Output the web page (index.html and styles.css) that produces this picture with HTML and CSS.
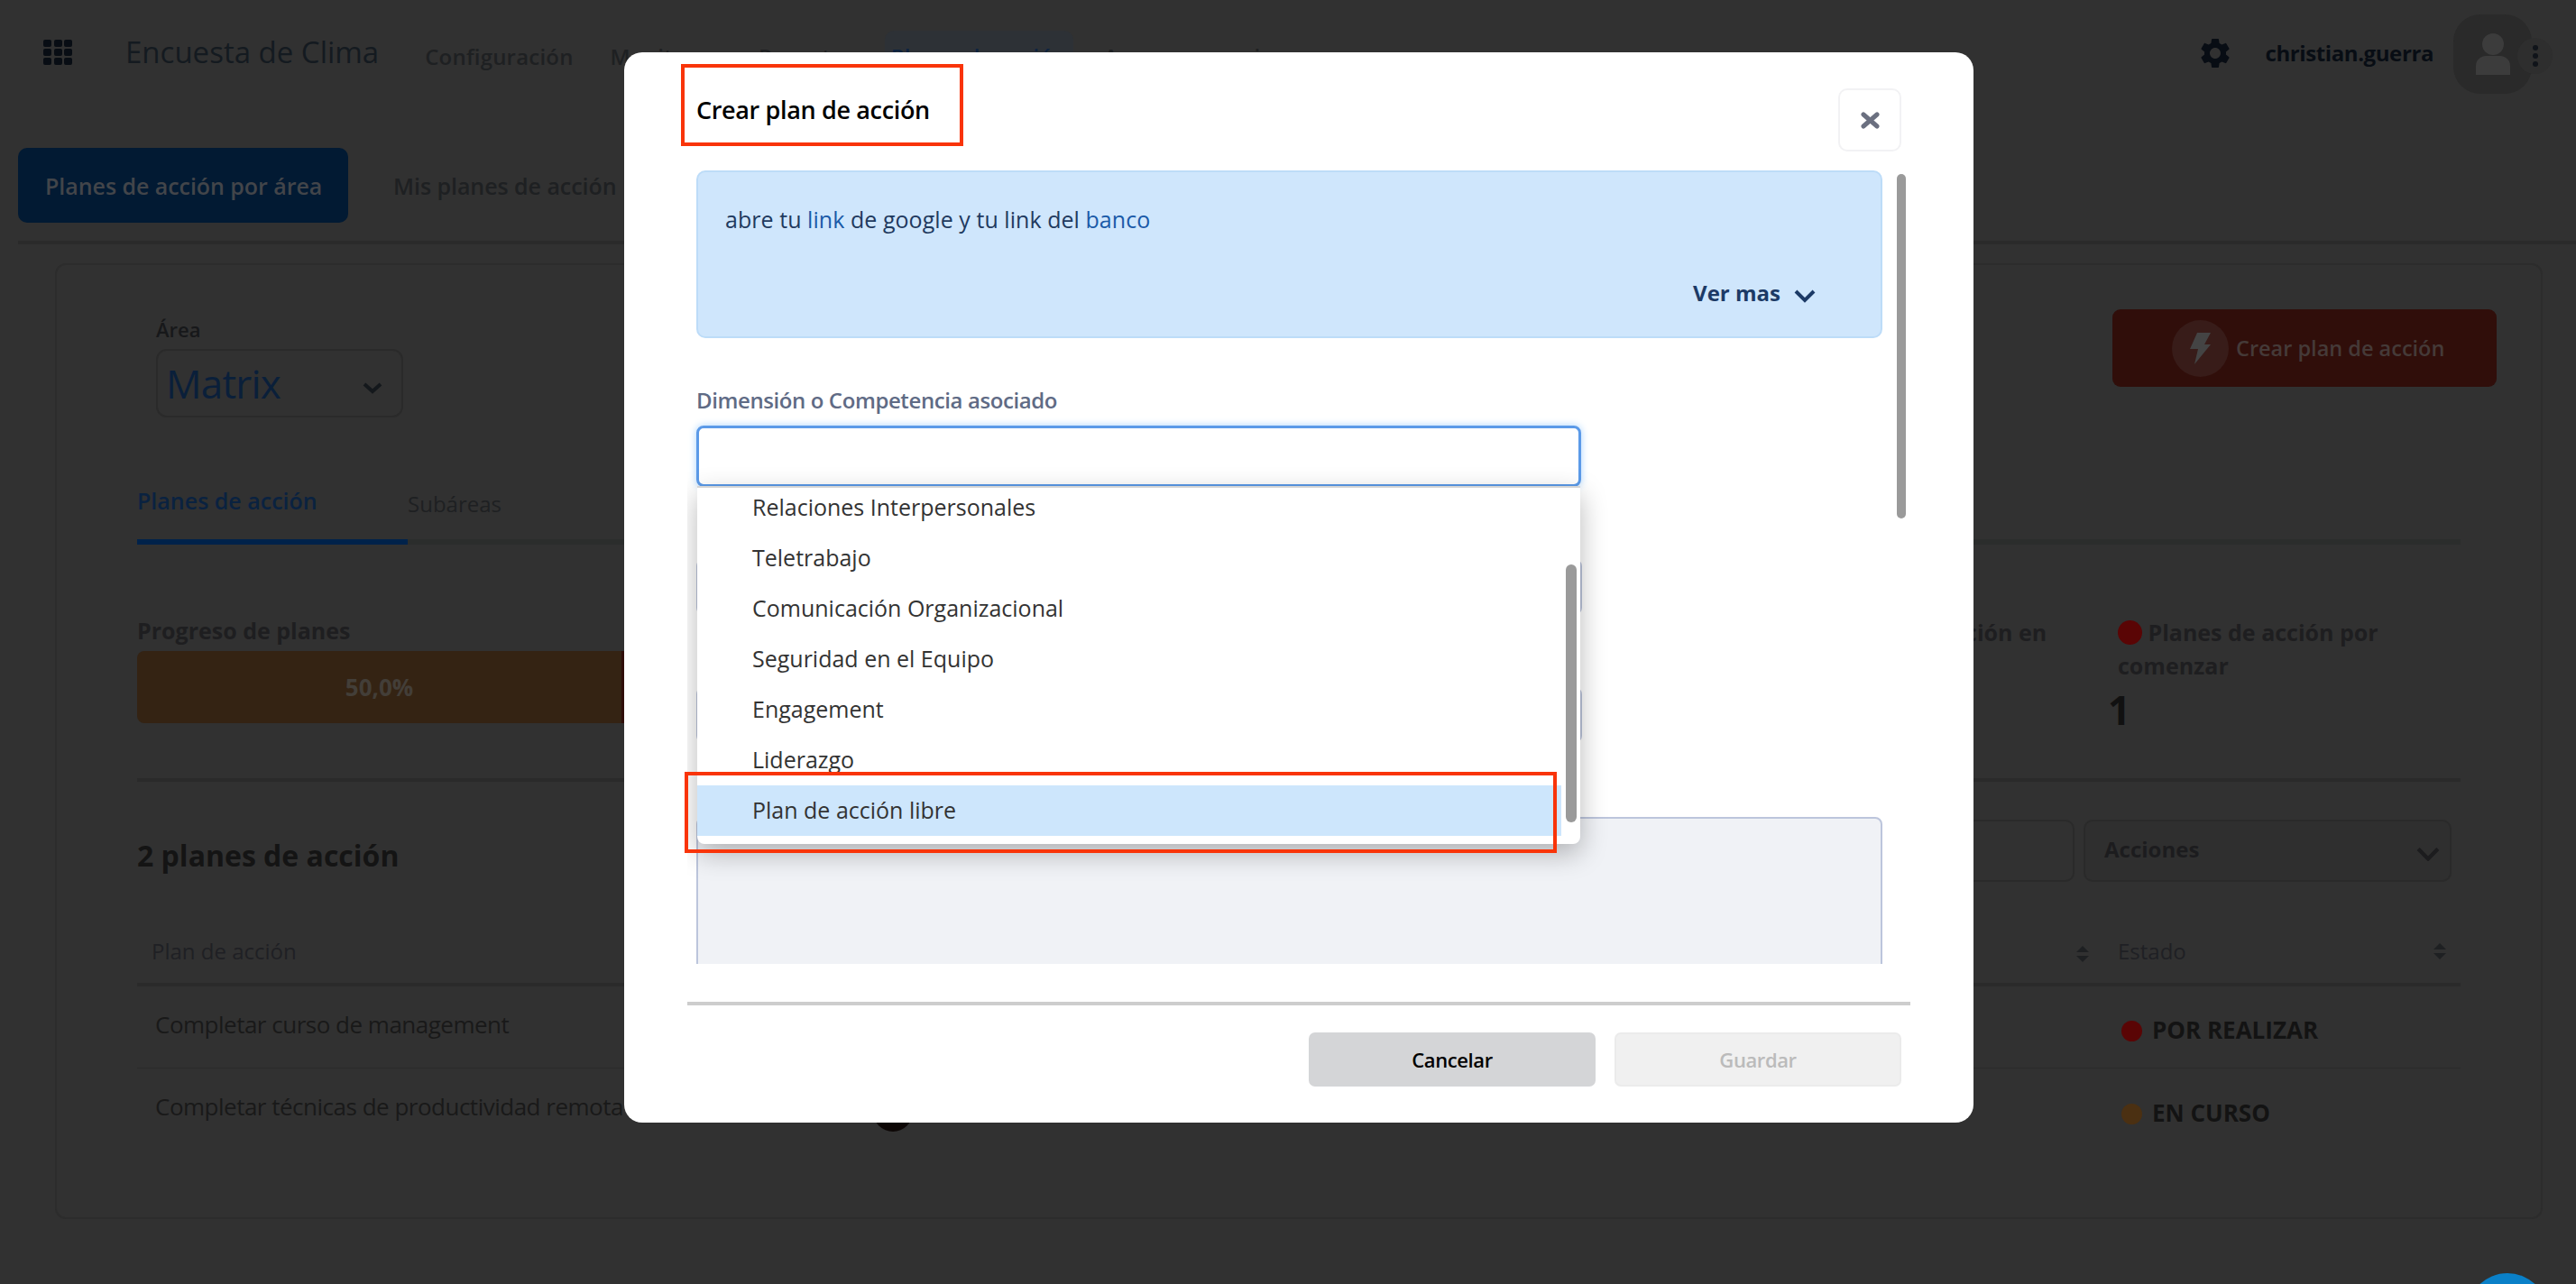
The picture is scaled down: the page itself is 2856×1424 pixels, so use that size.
FILE: index.html
```html
<!DOCTYPE html>
<html lang="es">
<head>
    <meta charset="UTF-8">
    <meta name="viewport" content="width=device-width, initial-scale=1.0">
    <title>Encuesta de Clima - Planes de acción</title>
    <link rel="stylesheet" href="styles.css">
</head>
<body>
    <header class="topbar">
        <div class="apps-icon">
            <span></span><span></span><span></span>
            <span></span><span></span><span></span>
            <span></span><span></span><span></span>
        </div>
        <div class="app-title">Encuesta de Clima</div>
        <nav class="main-nav">
            <a>Configuración</a>
            <a>Monitoreo</a>
            <a>Reportes</a>
            <a class="active">Planes de acción</a>
            <a>Accesos usuarios</a>
        </nav>
        <svg class="gear" viewBox="0 0 24 24"><path d="M19.14 12.94c.04-.3.06-.61.06-.94 0-.32-.02-.64-.07-.94l2.03-1.58a.49.49 0 0 0 .12-.61l-1.92-3.32a.488.488 0 0 0-.59-.22l-2.39.96c-.5-.38-1.03-.7-1.62-.94l-.36-2.54a.484.484 0 0 0-.48-.41h-3.84c-.24 0-.43.17-.47.41l-.36 2.54c-.59.24-1.13.57-1.62.94l-2.39-.96c-.22-.08-.47 0-.59.22L2.74 8.87c-.12.21-.08.47.12.61l2.03 1.58c-.05.3-.09.63-.09.94s.02.64.07.94l-2.03 1.58a.49.49 0 0 0-.12.61l1.92 3.32c.12.22.37.29.59.22l2.39-.96c.5.38 1.03.7 1.62.94l.36 2.54c.05.24.24.41.48.41h3.84c.24 0 .44-.17.47-.41l.36-2.54c.59-.24 1.13-.56 1.62-.94l2.39.96c.22.08.47 0 .59-.22l1.92-3.32c.12-.22.07-.47-.12-.61l-2.01-1.58zM12 15.6c-1.98 0-3.6-1.62-3.6-3.6s1.62-3.6 3.6-3.6 3.6 1.62 3.6 3.6-1.62 3.6-3.6 3.6z"/></svg>
        <div class="user-name">christian.guerra</div>
        <div class="avatar">
            <svg viewBox="0 0 40 46"><ellipse cx="20" cy="12" rx="12" ry="12"/><path d="M1 46V36c0-7 6-11 11-11h16c5 0 11 4 11 11v10z"/></svg>
            <div class="kebab"><i></i><i></i><i></i></div>
        </div>
    </header>

    <div class="page-tabs">
        <a class="page-tab active">Planes de acción por área</a>
        <a class="page-tab">Mis planes de acción</a>
    </div>

    <main class="card">
        <div class="card-top">
            <div class="area-block">
                <div class="area-label">Área</div>
                <div class="area-select">
                    <span>Matrix</span>
                    <svg class="chev" viewBox="0 0 24 14"><polyline points="3,3 12,11 21,3"/></svg>
                </div>
            </div>
            <button class="create-btn">
                <span class="bolt-circle"><svg viewBox="0 0 23 35"><polygon points="8,0 23,0 16,13 23,13 5,35 9,18 0,18"/></svg></span>
                Crear plan de acción
            </button>
        </div>

        <div class="card-body">
            <div class="sub-tabs">
                <a class="sub-tab active">Planes de acción</a>
                <a class="sub-tab">Subáreas</a>
            </div>

            <section class="stats">
                <div class="progress-col">
                    <div class="stat-title">Progreso de planes</div>
                    <div class="progress-bar">
                        <div class="progress-done">50,0%</div>
                        <div class="progress-rest"></div>
                    </div>
                </div>
                <div class="stat-col">
                    <div class="stat-title"><span class="dot orange"></span> Planes de acción en curso</div>
                    <div class="stat-value">1</div>
                </div>
                <div class="stat-col">
                    <div class="stat-title"><span class="dot red"></span> Planes de acción por comenzar</div>
                    <div class="stat-value">1</div>
                </div>
            </section>

            <section class="list-head">
                <h2>2 planes de acción</h2>
                <div class="list-tools">
                    <div class="search-box"></div>
                    <div class="actions-select">
                        Acciones
                        <svg class="chev" viewBox="0 0 24 14"><polyline points="2,2 12,12 22,2"/></svg>
                    </div>
                </div>
            </section>

            <table class="plans">
                <thead>
                    <tr>
                        <th class="col-plan">Plan de acción</th>
                        <th class="col-owner"></th>
                        <th class="col-date"><svg class="sort" viewBox="0 0 14 18"><polygon points="7,0 14,7 0,7"/><polygon points="0,11 14,11 7,18"/></svg></th>
                        <th class="col-state">Estado<svg class="sort" viewBox="0 0 14 18"><polygon points="7,0 14,7 0,7"/><polygon points="0,11 14,11 7,18"/></svg></th>
                    </tr>
                </thead>
                <tbody>
                    <tr>
                        <td class="plan-name">Completar curso de management</td>
                        <td><span class="owner"></span></td>
                        <td></td>
                        <td class="state"><span class="dot red"></span>POR REALIZAR</td>
                    </tr>
                    <tr>
                        <td class="plan-name">Completar técnicas de productividad remota</td>
                        <td><span class="owner"></span></td>
                        <td></td>
                        <td class="state"><span class="dot orange"></span>EN CURSO</td>
                    </tr>
                </tbody>
            </table>
        </div>
    </main>

    <div class="chat-bubble"></div>

    <div class="modal">
        <div class="modal-head">
            <h3>Crear plan de acción</h3>
            <button class="modal-close">
                <svg viewBox="0 0 21 19"><line x1="3" y1="3" x2="18" y2="16"/><line x1="18" y1="3" x2="3" y2="16"/></svg>
            </button>
        </div>

        <div class="modal-body">
            <div class="alert">
                <p>abre tu <a>link</a> de google y tu link del <a>banco</a></p>
                <div class="see-more">
                    Ver mas
                    <svg viewBox="0 0 26 16"><polyline points="3,3 13,13 23,3"/></svg>
                </div>
            </div>

            <label class="field-label">Dimensión o Competencia asociado</label>
            <div class="combo-input"></div>
            <div class="field"></div>
            <div class="field"></div>
            <div class="textarea"></div>

            <div class="dropdown">
                <div class="option first">Relaciones Interpersonales</div>
                <div class="option">Teletrabajo</div>
                <div class="option">Comunicación Organizacional</div>
                <div class="option">Seguridad en el Equipo</div>
                <div class="option">Engagement</div>
                <div class="option">Liderazgo</div>
                <div class="option selected">Plan de acción libre</div>
                <div class="dropdown-thumb"></div>
            </div>
            <div class="body-thumb"></div>
        </div>

        <div class="modal-foot">
            <button class="btn-cancel">Cancelar</button>
            <button class="btn-save">Guardar</button>
        </div>

        <div class="mark mark-title"></div>
        <div class="mark mark-option"></div>
    </div>
</body>
</html>
```

FILE: styles.css
```css
* {
    box-sizing: border-box;
}

html, body {
    margin: 0;
    padding: 0;
    height: 100%;
    overflow: hidden;
}

body {
    position: relative;
    background-color: #313131;
    font-family: "Open Sans", "Noto Sans", sans-serif;
    color: #1c1c1e;
}

a {
    text-decoration: none;
}

button {
    font-family: inherit;
    border: none;
}

/* top bar */
.topbar {
    display: flex;
    align-items: center;
    height: 120px;
    padding: 0 49px 0 48px;
    margin-bottom: 44px;
}

.apps-icon {
    display: grid;
    grid-template-columns: repeat(3, 9px);
    grid-template-rows: repeat(3, 8px);
    gap: 2px 2.5px;
    margin-top: -4px;
}

.apps-icon span {
    background-color: #080d14;
    border-radius: 2px;
}

.app-title {
    margin: -6px 0 0 59px;
    font-size: 33px;
    color: #141a20;
}

.main-nav {
    display: flex;
    gap: 27px;
    margin: 4px 0 0 44px;
}

.main-nav a {
    display: flex;
    align-items: center;
    height: 56px;
    padding: 0 7px;
    font-size: 24px;
    font-weight: 600;
    letter-spacing: 0.2px;
    color: #1e2022;
    border-radius: 10px;
}

.main-nav a.active {
    background-color: #2d3136;
    color: #0d2340;
}

.gear {
    width: 40px;
    height: 40px;
    margin: -3px 0 0 auto;
    fill: #080d14;
}

.user-name {
    margin: -4px 0 0 35px;
    font-size: 24px;
    font-weight: 700;
    letter-spacing: -0.4px;
    color: #080d14;
}

.avatar {
    position: relative;
    display: flex;
    align-items: center;
    justify-content: center;
    width: 87px;
    height: 88px;
    margin-left: 22px;
    background-color: #2a2a2a;
    border-radius: 30px;
}

.avatar svg {
    width: 40px;
    height: 46px;
    fill: #3c3c3c;
}

.kebab {
    position: absolute;
    left: 71px;
    top: 26px;
    display: flex;
    flex-direction: column;
    align-items: center;
    justify-content: center;
    gap: 3px;
    width: 39px;
    height: 40px;
    background-color: #2e2e2e;
    border-radius: 50%;
}

.kebab i {
    width: 6px;
    height: 6px;
    background-color: #10141a;
    border-radius: 50%;
}

/* page tabs */
.page-tabs {
    display: flex;
    align-items: center;
    gap: 50px;
    margin-left: 20px;
    padding-bottom: 20px;
    border-bottom: 4px solid #2a2a2a;
}

.page-tab {
    font-size: 25px;
    font-weight: 600;
    letter-spacing: -0.05px;
    color: #1e2022;
}

.page-tab.active {
    display: flex;
    align-items: center;
    width: 366px;
    height: 83px;
    padding: 0 0 0 30px;
    background-color: #021a33;
    border-radius: 10px;
    color: #42454a;
}

/* main card */
.card {
    height: 1060px;
    margin: 21px 37px 0 61px;
    border: 2px solid #2c2c2c;
    border-radius: 12px;
}

.card-top {
    display: flex;
    justify-content: space-between;
    align-items: flex-start;
    padding: 49px 49px 0 110px;
}

.area-block {
    padding-top: 7px;
}

.area-label {
    height: 30px;
    font-size: 22px;
    font-weight: 600;
    line-height: 30px;
    color: #17181a;
}

.area-select {
    display: flex;
    align-items: center;
    justify-content: space-between;
    width: 274px;
    height: 76px;
    margin-top: 7px;
    padding: 0 20px 0 9px;
    border: 2px solid #2a2a2a;
    border-radius: 12px;
    font-size: 44px;
    letter-spacing: -0.8px;
    color: #0a1f3a;
}

.area-select .chev {
    width: 24px;
    height: 14px;
    margin-top: 10px;
    fill: none;
    stroke: #14181c;
    stroke-width: 4;
}

.create-btn {
    display: flex;
    align-items: center;
    gap: 8px;
    width: 426px;
    height: 86px;
    padding: 0 0 0 66px;
    background-color: #300e0a;
    border-radius: 9px;
    font-size: 23.5px;
    font-weight: 600;
    color: #453a38;
}

.bolt-circle {
    display: flex;
    align-items: center;
    justify-content: center;
    width: 63px;
    height: 63px;
    background-color: #381c19;
    border-radius: 50%;
}

.bolt-circle svg {
    width: 23px;
    height: 35px;
    fill: #444;
}

.card-body {
    padding: 0 89px;
}

.sub-tabs {
    display: flex;
    height: 84px;
    margin-top: 57px;
    border-bottom: 6px solid #2b2d2c;
}

.sub-tab {
    display: flex;
    align-items: center;
    height: 84px;
    padding-bottom: 8px;
    font-size: 24px;
    color: #1e2022;
}

.sub-tab.active {
    width: 300px;
    border-bottom: 6px solid #00224a;
    font-size: 25px;
    font-weight: 600;
    color: #0a2240;
}

/* stats */
.stats {
    position: relative;
    display: flex;
    height: 184px;
    margin-top: 79px;
    border-bottom: 4px solid #2a2a2a;
}

.progress-col {
    width: 1840px;
}

.stat-title {
    font-size: 25px;
    font-weight: 700;
    line-height: 37px;
    color: #1e1e20;
}

.progress-col .stat-title {
    line-height: 32px;
}

.progress-bar {
    display: flex;
    width: 1360px;
    height: 80px;
    margin-top: 7px;
    border-radius: 8px;
    overflow: hidden;
}

.progress-done {
    display: flex;
    align-items: center;
    justify-content: center;
    width: 537px;
    background-color: #342313;
    font-size: 26px;
    font-weight: 700;
    color: #433e38;
}

.progress-rest {
    flex: 1;
    background-color: #300e0a;
}

.stat-col {
    width: 340px;
    margin-right: 16px;
}

.stat-col .stat-value {
    margin: 3px 0 0 -11px;
    font-size: 44px;
    font-weight: 700;
    line-height: 54px;
    color: #111;
}

.dot {
    display: inline-block;
    width: 27px;
    height: 27px;
    border-radius: 50%;
    vertical-align: -4px;
}

.dot.red {
    background-color: #5a0505;
}

.dot.orange {
    background-color: #4b3012;
}

/* list */
.list-head {
    display: flex;
    justify-content: space-between;
    align-items: flex-start;
    padding: 42px 10px 0 0;
}

.list-head h2 {
    margin: 18px 0 0;
    font-size: 32px;
    font-weight: 700;
    color: #141414;
}

.list-tools {
    display: flex;
    gap: 10px;
}

.search-box,
.actions-select {
    height: 69px;
    border: 2px solid #2a2a2a;
    border-radius: 10px;
}

.search-box {
    width: 400px;
}

.actions-select {
    display: flex;
    align-items: center;
    justify-content: space-between;
    width: 408px;
    padding: 0 11px 4px 21px;
    background-color: #2f2f2f;
    font-size: 24px;
    font-weight: 700;
    color: #1c1c1e;
}

.actions-select .chev {
    width: 26px;
    height: 16px;
    margin-top: 10px;
    fill: none;
    stroke: #1c1c1e;
    stroke-width: 4;
}

.plans {
    width: 100%;
    margin-top: 41px;
    border-collapse: collapse;
    table-layout: fixed;
}

.plans th {
    height: 73px;
    padding: 0;
    font-size: 24px;
    font-weight: 500;
    text-align: left;
    color: #1f2024;
    border-bottom: 4px solid #2a2a2a;
}

.col-plan {
    width: 806px;
    padding-left: 16px !important;
}

.col-owner {
    width: 900px;
}

.col-date {
    width: 472px;
    text-align: right !important;
    padding-right: 14px !important;
}

.col-state {
    padding-left: 18px !important;
    position: relative;
}

.sort {
    width: 14px;
    height: 18px;
    fill: #1e2022;
    vertical-align: middle;
}

.col-state .sort {
    position: absolute;
    right: 16px;
    top: 27px;
}

.plans td {
    height: 92px;
    padding: 0;
    border-bottom: 1px solid #2a2a2a;
}

.plans tr:last-child td {
    border-bottom: none;
}

.plan-name {
    padding: 0 0 6px 20px !important;
    font-size: 26px;
    letter-spacing: -0.5px;
    color: #191919;
    white-space: nowrap;
}

.owner {
    display: block;
    width: 44px;
    height: 44px;
    margin: 6px 0 0 10px;
    background-color: #0d0706;
    border-radius: 50%;
}

.state {
    padding: 7px 0 0 22px !important;
    font-size: 26px;
    font-weight: 700;
    color: #131313;
}

.state .dot {
    width: 23px;
    height: 23px;
    margin-right: 11px;
    vertical-align: -3px;
}

/* only the top of the round chat button is on screen */
.chat-bubble {
    position: absolute;
    left: 2735px;
    top: 1412px;
    width: 90px;
    height: 12px;
    overflow: hidden;
}

.chat-bubble::before {
    content: "";
    display: block;
    width: 90px;
    height: 90px;
    background-color: #0a80c8;
    border-radius: 50%;
}

/* modal */
.modal {
    position: absolute;
    left: 692px;
    top: 58px;
    width: 1496px;
    height: 1187px;
    background-color: #fff;
    border-radius: 20px;
}

.modal-head {
    display: flex;
    justify-content: space-between;
    align-items: flex-start;
    padding: 40px 80px 0;
}

.modal-head h3 {
    margin: 5px 0 0;
    font-size: 27px;
    font-weight: 600;
    letter-spacing: -0.35px;
    line-height: 38px;
    color: #000;
}

.modal-close {
    display: flex;
    align-items: center;
    justify-content: center;
    width: 70px;
    height: 70px;
    background-color: #fff;
    border: 2px solid #f2f2f4;
    border-radius: 10px;
}

.modal-close svg {
    width: 21px;
    height: 19px;
    stroke: #6b7080;
    stroke-width: 5;
    stroke-linecap: round;
}

.modal-body {
    position: relative;
    height: 880px;
    margin: 21px 70px 0;
    padding: 0 31px 0 10px;
    overflow: hidden;
}

.alert {
    display: flex;
    flex-direction: column;
    justify-content: space-between;
    height: 186px;
    padding: 35px 38px 32px 30px;
    background-color: #cfe6fc;
    border: 2px solid #bddcf8;
    border-radius: 10px;
}

.alert p {
    margin: 0;
    font-size: 25px;
    letter-spacing: 0.05px;
    color: #1f3a5f;
}

.alert a {
    color: #1a5aa8;
}

.see-more {
    display: flex;
    align-items: center;
    justify-content: flex-end;
    gap: 14px;
    font-size: 24px;
    font-weight: 700;
    color: #1c3a66;
}

.see-more svg {
    width: 26px;
    height: 16px;
    margin: 6px 33px 0 0;
    fill: none;
    stroke: #1c3a66;
    stroke-width: 4;
}

.field-label {
    display: block;
    margin-top: 51px;
    font-size: 24px;
    font-weight: 600;
    letter-spacing: -0.4px;
    line-height: 36px;
    color: #5f6b85;
}

.combo-input {
    width: 981px;
    height: 68px;
    margin-top: 10px;
    border: 3px solid #5b9ae8;
    border-radius: 8px;
    box-shadow: 0 0 8px #a8d4ff;
}

.field {
    width: 982px;
    height: 62px;
    margin-top: 80px;
    background-color: #f0f2f6;
    border: 2px solid #bcc5dc;
    border-radius: 8px;
}

.textarea {
    height: 300px;
    margin-top: 82px;
    background-color: #f0f2f6;
    border: 2px solid #bcc5dc;
    border-radius: 8px;
}

.dropdown {
    position: absolute;
    left: 11px;
    top: 350px;
    width: 979px;
    height: 397px;
    background-color: #fff;
    border-top: 2px solid #d5d5d5;
    border-radius: 0 0 8px 8px;
    box-shadow: 0 10px 30px rgba(0, 0, 0, 0.28);
    overflow: hidden;
}

.option {
    display: flex;
    align-items: center;
    width: 958px;
    height: 56px;
    padding: 0 0 2px 61px;
    font-size: 25px;
    color: #333;
}

.option.first {
    margin-top: -6px;
}

.option.selected {
    background-color: #cde6fc;
}

.dropdown-thumb {
    position: absolute;
    right: 4px;
    top: 85px;
    width: 12px;
    height: 286px;
    background-color: #9a9a9a;
    border-radius: 6px;
}

.body-thumb {
    position: absolute;
    right: 5px;
    top: 4px;
    width: 10px;
    height: 382px;
    background-color: #9a9a9a;
    border-radius: 5px;
}

.modal-foot {
    display: flex;
    justify-content: flex-end;
    gap: 21px;
    margin: 42px 70px 0;
    padding: 30px 10px 0 0;
    border-top: 4px solid #cdcdcd;
}

.modal-foot button {
    width: 318px;
    height: 60px;
    font-size: 22px;
    font-weight: 600;
    letter-spacing: -0.4px;
    border-radius: 7px;
}

.btn-cancel {
    background-color: #d4d5d7;
    color: #000;
}

.btn-save {
    background-color: #f0f0f0;
    border: 2px solid #ebebeb !important;
    color: #bbb;
}

/* red marks drawn over the capture */
.mark {
    position: absolute;
    border: 4px solid #f93409;
    pointer-events: none;
}

.mark-title {
    left: 63px;
    top: 13px;
    width: 313px;
    height: 91px;
}

.mark-option {
    left: 67px;
    top: 798px;
    width: 967px;
    height: 90px;
}
```
